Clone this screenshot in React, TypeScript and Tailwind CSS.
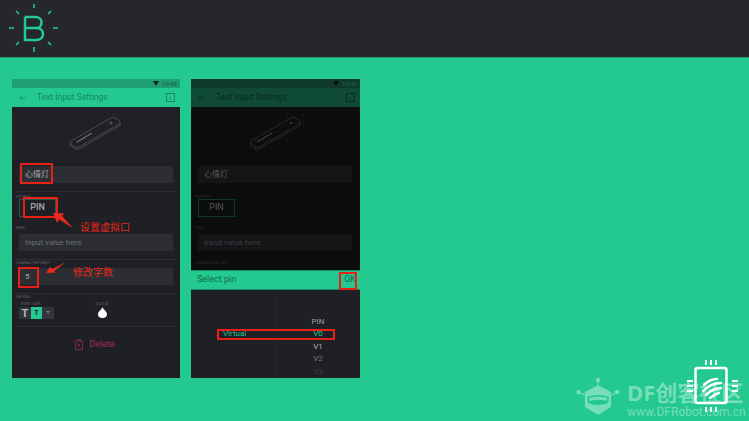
const sans = "[font-family:Roboto,'Noto_Sans_CJK_SC',sans-serif]";

function Chip({ dim }: { dim?: boolean }) {
  return (
    <svg width="52" height="34" viewBox="0 0 52 34" className={dim ? "opacity-25" : "opacity-45"}>
      <g fill="none" stroke="#d8d8d8" strokeWidth="0.5">
        <path d="M1 25 L41 2 Q43 1 45 2 L50 5 Q51 7 49 8 L9 31 Q7 32 5 31 L1 28 Q0 26 1 25Z" />
        <path d="M0.500 27 V29.500 L5 33 Q7 34 9 33 L50 9.500 V7" />
      </g>
      <path d="M7 26 L22 17" stroke="#fff" strokeWidth="1.200" strokeDasharray="2 .5" />
      <circle cx="41" cy="7" r="1" fill="none" stroke="#ddd" strokeWidth="0.7" />
    </svg>
  );
}

function Field({ children, w = "w-[154px]", dim }: { children: React.ReactNode; w?: string; dim?: boolean }) {
  return (
    <div className={`${w} h-[17px] ml-[7px] flex items-center pl-[6px] text-[8px] ${dim ? "bg-[#141517] text-[#55585a]" : "bg-[#2c2e33] text-[#a4a6a8]"}`}>
      {children}
    </div>
  );
}

function Label({ children, dim }: { children: React.ReactNode; dim?: boolean }) {
  return <div className={`h-[6px] ml-[4px] text-[4px] leading-[6px] ${dim ? "text-[#2f3133]" : "text-[#63666a]"}`}>{children}</div>;
}

function TopBars({ dim }: { dim?: boolean }) {
  return (
    <>
      <div className={`h-[9px] flex items-center justify-end pr-[3px] gap-[3px] text-[6px] ${dim ? "bg-[#0f3a2b] text-[#1d5f49]" : "bg-[#1f9e72] text-[#155a42]"}`}>
        <svg width="6" height="5" viewBox="0 0 6 5"><path d="M0 0H6L3 5Z" fill={dim ? "#0a0b0c" : "#12241e"} /></svg>
        <span>10:45</span>
      </div>
      <div className={`h-[19px] flex items-center pl-[7px] pr-[5px] text-[8.500px] ${dim ? "bg-[#0f4a36] text-[#062c20]" : "bg-[#23c98f] text-[#158a63]"}`}>
        <svg width="7" height="6" viewBox="0 0 8 6" fill="none" stroke="currentColor" strokeWidth="0.8"><path d="M8 3H1M3 .8 1 3l2 2.200" /></svg>
        <span className="ml-[11px] flex-1">Text Input Settings</span>
        <span className="w-[9px] h-[9px] border border-current flex items-center justify-center text-[6px] leading-none">i</span>
      </div>
    </>
  );
}

function Preview({ dim }: { dim?: boolean }) {
  return (
    <div className="h-[51px] flex items-center justify-center bg-[linear-gradient(#ffffff04_1px,transparent_1px),linear-gradient(90deg,#ffffff04_1px,transparent_1px)] bg-[size:8px_8px]">
      <Chip dim={dim} />
    </div>
  );
}

function Sep({ dim }: { dim?: boolean }) {
  return <div className={`h-px mx-[4px] ${dim ? "bg-[#111214]" : "bg-[#2b2d32]"}`} />;
}

function Red({ className }: { className: string }) {
  return <div className={`absolute border-2 border-[#e8201a] ${className}`} />;
}

function Arrow({ className, d }: { className: string; d: string }) {
  return (
    <svg className={`absolute ${className}`} width="36" height="24" viewBox="0 0 36 24">
      <path d={d} fill="#ea2a1c" />
    </svg>
  );
}

function LeftPhone() {
  return (
    <div className="relative w-[168px] h-[299px] bg-[#1e2025] shrink-0">
      <TopBars />
      <Preview />
      <div className="h-[8px]" />
      <Field>心情灯</Field>
      <div className="h-[8px]" />
      <Sep />
      <div className="h-[2px]" />
      <div className="h-[5px] overflow-visible"><Label>OUTPUT</Label></div>
      <div className="ml-[7px] w-[37px] h-[18px] border border-[#1f5f4a] text-[#a4a6a8] text-[9px] flex items-center justify-center font-medium">PIN</div>
      <div className="h-[8px]" />
      <Label>HINT</Label>
      <div className="h-[3px]" />
      <Field>
        <span className="text-[#6f7276]">Input value here</span>
      </Field>
      <div className="h-[8px]" />
      <Sep />
      <Label>CHARACTER LIMIT</Label>
      <div className="h-[2px]" />
      <Field>5</Field>
      <div className="h-[8px]" />
      <Sep />
      <Label>DESIGN</Label>
      <div className="flex ml-[7px] mt-[1px]">
        <div className="w-[73px]">
          <div className="text-[4px] leading-[5px] text-[#63666a] ml-[2px]">FONT SIZE</div>
          <div className="flex h-[12px] mt-[1px]">
            <div className="w-[12px] bg-[#33353a] text-[#b5b5b5] text-[11px] font-bold flex items-center justify-center leading-none">T</div>
            <div className="w-[11px] bg-[#23c98f] text-[#123] text-[7px] font-bold flex items-center justify-center leading-none">T</div>
            <div className="w-[12px] bg-[#33353a] text-[#b5b5b5] text-[4px] font-bold flex items-center justify-center leading-none">T</div>
          </div>
        </div>
        <div className="w-[20px] flex flex-col items-center">
          <div className="text-[4px] leading-[5px] text-[#63666a]">CLOUD</div>
          <svg width="9" height="11" viewBox="0 0 10 12" className="mt-[1px]"><path d="M5 0C6 3 10 5 10 8A5 4 0 0 1 0 8C0 5 4 3 5 0Z" fill="#fff" /></svg>
        </div>
      </div>
      <div className="h-[7px]" />
      <Sep />
      <div className="flex items-center justify-center gap-[6px] mt-[11px] pr-[2px] text-[9px] text-[#a52d50]">
        <svg width="8" height="11" viewBox="0 0 8 11" fill="none" stroke="currentColor" strokeWidth="0.7">
          <path d="M.5 2h7v8.500h-7zM2.500 2V.7h3V2M2.800 4.500l2.400 3M5.200 4.500l-2.400 3" />
        </svg>
        <span>Delete</span>
      </div>

      <Red className="left-[8px] top-[84px] w-[33px] h-[21px]" />
      <Red className="left-[11px] top-[118px] w-[35px] h-[21px]" />
      <Red className="left-[6px] top-[188px] w-[21px] h-[21px]" />
      <Arrow className="left-[38px] top-[131px]" d="M3 3 L14 3.500 L12 6 L23 18 L9 9.500 L7 13 Z" />
      <Arrow className="left-[32px] top-[181px]" d="M2 13 L6 7 L8 9 L22 2 L10 11 L12 12.500 Z" />
      <div className="absolute left-[68px] top-[143px] text-[#e8261c] text-[10px] leading-[12px]">设置虚拟口</div>
      <div className="absolute left-[61px] top-[188px] text-[#e8261c] text-[10px] leading-[12px]">修改字数</div>
    </div>
  );
}

function RightPhone() {
  return (
    <div className="relative w-[169px] h-[299px] bg-[#0b0c0d] flex flex-col shrink-0">
      <TopBars dim />
      <Preview dim />
      <div className="h-[8px]" />
      <Field dim>心情灯</Field>
      <div className="h-[11px]" />
      <div className="h-[5px] overflow-visible"><Label dim>OUTPUT</Label></div>
      <div className="ml-[7px] w-[37px] h-[18px] border border-[#10382c] text-[#55585a] text-[9px] flex items-center justify-center">PIN</div>
      <div className="h-[8px]" />
      <Label dim>HINT</Label>
      <div className="h-[3px]" />
      <Field dim>
        <span className="text-[#3d3f42]">Input value here</span>
      </Field>
      <div className="h-[9px]" />
      <Label dim>CHARACTER LIMIT</Label>
      <div className="flex-1" />
      <div className="h-[20px] bg-[#23c98f] border-y border-[#1a8f67] flex items-center justify-between pl-[6px] pr-[4px] text-[9px] text-[#146a4d]">
        <span>Select pin</span>
        <span>OK</span>
      </div>
      <div className="relative h-[88px] bg-[#1e2025] text-[8px] leading-[12px]">
        <div className="absolute left-[85px] top-0 bottom-0 w-px bg-[#232529]" />
        <div className="absolute left-[32px] top-[38px] text-[#23c98f]">Virtual</div>
        <div className="absolute left-[120px] top-[26px] w-[14px] text-center text-[#9a9c9e]">PIN</div>
        <div className="absolute left-[120px] top-[38px] w-[14px] text-center text-[#23c98f]">V0</div>
        <div className="absolute left-[120px] top-[51px] w-[14px] text-center text-[#b0b2b4]">V1</div>
        <div className="absolute left-[120px] top-[63px] w-[14px] text-center text-[#73767a]">V2</div>
        <div className="absolute left-[120px] top-[76px] w-[14px] text-center text-[#3d4044]">V3</div>
      </div>
      <Red className="left-[148px] top-[193px] w-[18px] h-[18px]" />
      <Red className="left-[26px] top-[250px] w-[118px] h-[11px]" />
    </div>
  );
}

export default function App() {
  return (
    <div className={`relative w-[749px] h-[421px] overflow-hidden bg-[#23c98f] ${sans}`}>
      <header className="h-[58px] bg-[#25272c] border-b border-[#1f9e72] pl-[9px] pt-[4px]">
        <svg width="50" height="50" viewBox="0 0 50 50" fill="none" stroke="#23c98f">
          <path strokeWidth="1.500" d="M25 0v4M25 43v5M0 24h5M44 24h5M7 7l3 3M39 38l3 3M42 7l-3 3M7 41l3-3" />
          <path d="M16 13V36H27C31.500 36 34 33.500 34 30C34 26.500 31.500 24 27.500 24H16M27.500 24C30.500 24 32.500 21.500 32.500 18.500C32.500 15 30 13 26.500 13H16" strokeWidth="2.500" />
        </svg>
      </header>
      <main className="flex gap-[11px] pl-[12px] pt-[21px]">
        <LeftPhone />
        <RightPhone />
      </main>

      <div className="absolute left-[576px] top-[377px] flex items-start text-[#76deb9]">
        <svg width="44" height="40" viewBox="0 0 44 40">
          <circle cx="2.500" cy="15" r="2.200" fill="#76deb9" />
          <circle cx="41" cy="15" r="2.200" fill="#76deb9" />
          <circle cx="22" cy="3" r="2.200" fill="#76deb9" />
          <path d="M22 3v6M3 15l7 4M41 15l-7 4" stroke="#76deb9" strokeWidth="1.200" />
          <path d="M22 8 35 15V30L22 38 9 30V15Z" fill="#76deb9" />
          <path d="M11 20Q22 16 33 20L32 26Q22 30 12 26Z" fill="#23c98f" />
          <path d="M13 21Q22 18 31 21L30.500 24Q22 21.500 13.500 24Z" fill="#76deb9" />
        </svg>
        <div className="ml-[7px] mt-[5px]">
          <div className="text-[22px] leading-[21px] font-bold whitespace-nowrap [font-family:'Open_Sans','Noto_Sans_CJK_SC',sans-serif]">DF创客社区</div>
          <div className="mt-[3px] text-[12px] leading-[13px] whitespace-nowrap">www.DFRobot.com.cn</div>
        </div>
      </div>

      <svg className="absolute left-[686px] top-[358px]" width="52" height="56" viewBox="0 0 52 56" fill="none">
        <path d="M20 2v5M25 2v5M30 2v5M20 49v5M25 49v5M30 49v5M1 23h6M1 28h6M1 33h6M46 23h6M46 28h6M46 33h6" stroke="#fff" strokeWidth="1.800" />
        <rect x="9.500" y="10" width="31" height="35" rx="2" stroke="#fff" strokeWidth="2.500" />
        <g stroke="#fff" strokeWidth="2.400" strokeLinecap="round">
          <path d="M18 27Q24 21 31 21" />
          <path d="M17 33Q25 25 35 25" />
          <path d="M20 37Q27 30 35 30" />
          <path d="M24 40Q29 36 33 35" />
        </g>
      </svg>
    </div>
  );
}
